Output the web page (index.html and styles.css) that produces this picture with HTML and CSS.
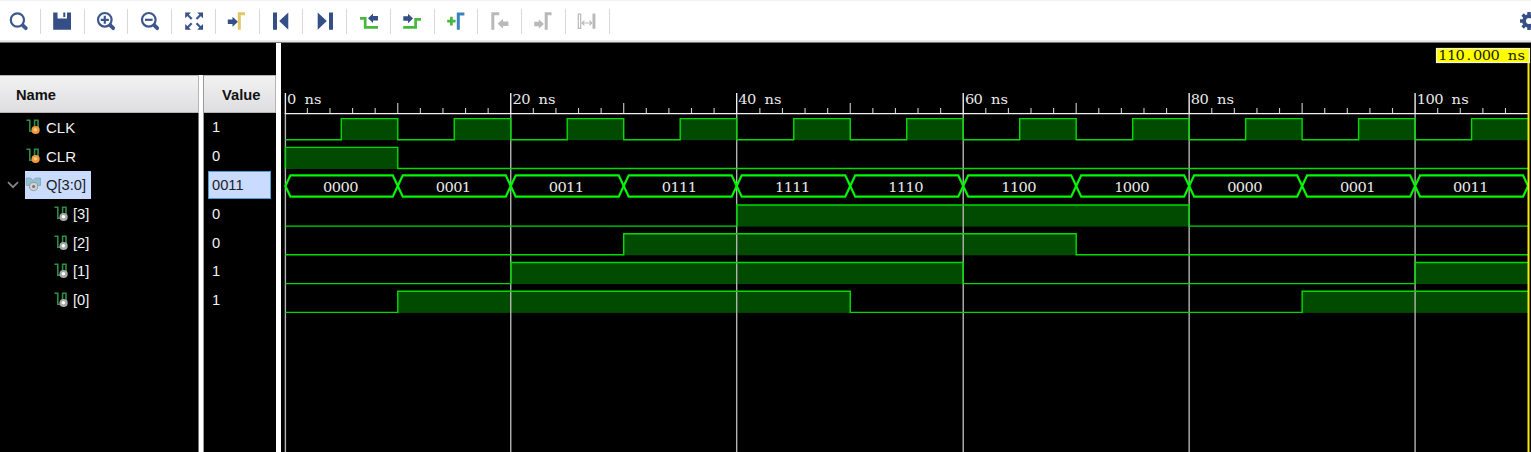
FILE: index.html
```html
<!DOCTYPE html>
<html lang="en">
<head>
<meta charset="utf-8">
<title>Waveform</title>
<link rel="stylesheet" href="styles.css">
</head>
<body>
<svg class="defs" width="0" height="0">
  <defs>
    <symbol id="scalar" viewBox="0 0 16 16">
      <path class="sig" d="M1.5 1.2H4.8V12.3H9.6V1.2H13V12"/>
      <circle class="ball" cx="10.6" cy="11" r="4.1"/>
      <circle class="core" cx="10.4" cy="10.8" r="1.8"/>
    </symbol>
  </defs>
</svg>
<div class="app">
  <header class="toolbar">
    <div class="tool"><svg viewBox="0 0 20 20"><g class="navy-line"><circle cx="8.4" cy="9" r="6.6"/><path class="thick" d="M14 14.6L16.8 17.2"/></g></svg></div>
    <div class="tool"><svg viewBox="0 0 20 20"><path class="navy" d="M1.2 1.5H5.5V7.5H15V1.5H19V18.7H1.2ZM11.3 1.5H13.3V6H11.3Z"/></svg></div>
    <div class="tool"><svg viewBox="0 0 20 20"><g class="navy-line"><circle cx="8.8" cy="8.8" r="6.8"/><path class="thick" d="M14.4 14.4L17.2 17.2"/><path d="M4.8 8.8H12.8M8.8 4.8V12.8"/></g></svg></div>
    <div class="tool"><svg viewBox="0 0 20 20"><g class="navy-line"><circle cx="8.8" cy="8.8" r="6.8"/><path class="thick" d="M14.4 14.4L17.2 17.2"/><path d="M5 8.8H12.6"/></g></svg></div>
    <div class="tool"><svg viewBox="0 0 20 20"><path class="navy" d="M1.2 1.5H7L1.2 7.3ZM13.2 1.5H19V7.3ZM1.2 13V18.8H7ZM19 13V18.8H13.2Z"/><path class="navy-line" d="M3 3.3L7.7 8M17.2 3.3L12.5 8M3 17L7.7 12.3M17.2 17L12.5 12.3"/></svg></div>
    <div class="tool"><svg viewBox="0 0 20 20"><path class="navy" d="M.8 8.6H5.5V5.8L11 10.8L5.5 15.8V13H.8Z"/><path class="gold-line" d="M12.3 18.7V2.8H18"/></svg></div>
    <div class="tool"><svg viewBox="0 0 20 20"><path class="navy" d="M2 1.5H6V18.7H2ZM17.3 1.5V18.7L8.2 10.1Z"/></svg></div>
    <div class="tool"><svg viewBox="0 0 20 20"><path class="navy" d="M14 1.5H18V18.7H14ZM2.7 1.5V18.7L11.8 10.1Z"/></svg></div>
    <div class="tool"><svg viewBox="0 0 20 20"><path class="navy" d="M9 7.2L14 2.5V5H19V9.5H14V12Z"/><path class="green-line" d="M1 7.3H6.2V16.4H19"/></svg></div>
    <div class="tool"><svg viewBox="0 0 20 20"><path class="navy" d="M11 7.4L6 2.7V5.2H1.3V9.7H6V12.2Z"/><path class="green-line" d="M1.2 16.4H13.6V8.3H19"/></svg></div>
    <div class="tool"><svg viewBox="0 0 20 20"><path class="green-line" d="M1.2 10.1H9.6M5.4 5.8V14.4"/><path class="blue-line" d="M12.3 18.7V2.9H18.4"/></svg></div>
    <div class="tool"><svg viewBox="0 0 20 20"><path class="gray-line" d="M2.8 18.7V2.8H9.3"/><path class="gray" d="M7.6 12.7L13 7.8V10.4H18.4V15H13V17.6Z"/></svg></div>
    <div class="tool"><svg viewBox="0 0 20 20"><path class="gray-line" d="M13.2 18.7V2.8H18.6"/><path class="gray" d="M10.9 13L5.8 8.3V10.8H1.2V15.2H5.8V17.7Z"/></svg></div>
    <div class="tool"><svg viewBox="0 0 20 20"><path class="gray" d="M15.5 2.6H18.4V17.8H15.5Z"/><path class="gray-thin" d="M1.3 3.1H3.7V17.3H1.3ZM5.4 12H14.4M7.4 9.7L5.1 12L7.4 14.3M12.4 9.7L14.7 12L12.4 14.3"/></svg></div>
    <div class="settings"><svg viewBox="0 0 20 20"><circle class="gear-ring" cx="10" cy="10" r="4.9"/><path class="gear-teeth" d="M10 1V4M10 16V19M1 10H4M16 10H19M3.6 3.6L5.8 5.8M14.2 14.2L16.4 16.4M16.4 3.6L14.2 5.8M5.8 14.2L3.6 16.4"/></svg></div>
  </header>
  <main class="viewer">
    <section class="signals">
      <div class="column names">
        <div class="head">Name</div>
        <div class="row top"><svg class="icon orange"><use href="#scalar"/></svg><span>CLK</span></div>
        <div class="row top"><svg class="icon orange"><use href="#scalar"/></svg><span>CLR</span></div>
        <div class="row bus">
          <svg class="chevron" viewBox="0 0 12 8"><path d="M1 1.2L6 6.2L11 1.2"/></svg>
          <div class="selected">
            <svg class="bus-icon" viewBox="0 0 16 16"><path class="bus-shape" d="M1.3 1H5.8L8 3.5L10.2 1H15.5V8.5H12L8 5L4 8.5H1.3Z"/><circle class="bus-ball" cx="8.6" cy="9.5" r="4.1"/><circle class="bus-core" cx="8.6" cy="9.5" r="1.6"/></svg>
            <span>Q[3:0]</span>
          </div>
        </div>
        <div class="row bit"><svg class="icon silver"><use href="#scalar"/></svg><span>[3]</span></div>
        <div class="row bit"><svg class="icon silver"><use href="#scalar"/></svg><span>[2]</span></div>
        <div class="row bit"><svg class="icon silver"><use href="#scalar"/></svg><span>[1]</span></div>
        <div class="row bit"><svg class="icon silver"><use href="#scalar"/></svg><span>[0]</span></div>
      </div>
      <div class="column values">
        <div class="head">Value</div>
        <div class="row">1</div>
        <div class="row">0</div>
        <div class="row active">0011</div>
        <div class="row">0</div>
        <div class="row">0</div>
        <div class="row">1</div>
        <div class="row">1</div>
      </div>
    </section>
    <svg class="wave" id="wave" viewBox="281 43 1250 409"></svg>
  </main>
</div>
<script src="wave.js"></script>
</body>
</html>
```

FILE: styles.css
```css
* { box-sizing: border-box; }
body { margin: 0; overflow: hidden; background: #000; font: 14.7px "Liberation Sans", Arial, sans-serif; }
.defs { position: absolute; }
.app { display: flex; flex-direction: column; height: 452px; }

.toolbar {
  display: flex; align-items: center; flex: none; height: 43px; padding-bottom: 1px;
  background: linear-gradient(#f3f3f3 1px, #fff 1px, #fff 40px, #eee 40px, #ddd 42px, #777 42px);
  overflow: hidden;
}
.tool {
  display: flex; align-items: center; justify-content: center; flex: none;
  width: 43.74px; height: 25px; border-right: 1px solid #d8d8d8;
}
.tool:first-child { width: 41px; padding-right: 3px; }
.tool svg, .settings svg { display: block; flex: none; width: 20px; height: 20px; }
.settings { display: flex; margin-left: auto; width: 12px; }
.navy { fill: #344f86; fill-rule: evenodd; }
.navy-line { fill: none; stroke: #3d578d; stroke-width: 2.2; }
.thick { stroke-width: 3.8; stroke-linecap: round; }
.gold-line { fill: none; stroke: #e2c565; stroke-width: 3; }
.green-line { fill: none; stroke: #45b83e; stroke-width: 2.7; }
.blue-line { fill: none; stroke: #3a82bd; stroke-width: 3; }
.gray { fill: #b9b9b9; }
.gray-line { fill: none; stroke: #b9b9b9; stroke-width: 3; }
.gray-thin { fill: none; stroke: #b9b9b9; stroke-width: 1.2; }
.gear-ring { fill: none; stroke: #344f86; stroke-width: 3.8; }
.gear-teeth { fill: none; stroke: #344f86; stroke-width: 3.5; }

.viewer { display: flex; flex: 1; min-height: 0; }
.signals { display: flex; flex: none; width: 281px; padding-top: 32px; border-right: 5px solid #fff; color: #f2f2f2; }
.column { display: flex; flex-direction: column; }
.names { width: 203px; border-right: 4px solid #fff; box-shadow: inset -1px 0 #777; }
.values { width: 73px; border-left: 1px solid #999; }
.head {
  display: flex; align-items: center; height: 38px; flex: none; padding-top: 2px;
  border: solid #b5b5b8; border-width: 1px 1px 1px 0;
  background: linear-gradient(#f2f2f3, #dedee1);
  color: #111; font-weight: bold;
}
.names .head { padding-left: 16px; }
.values .head { padding-left: 18px; }
.row { display: flex; align-items: center; height: 28.8px; flex: none; }
.top { padding-left: 25px; font-size: 15px; }
.bit { padding-left: 53px; }
.icon { width: 16px; height: 16px; margin-right: 5px; }
.bit .icon { margin-right: 4px; }
.sig { fill: none; stroke: #2e8d45; stroke-width: 1.6; }
.orange { fill: #f0983a; }
.silver { fill: #a9a9a9; }
.icon .core { fill: #fff; fill-opacity: .4; }
.orange { color: #ffc880; }
.silver { color: #fff; }
.core { fill: currentColor; }
.bus { padding-left: 7px; }
.chevron { width: 12px; height: 8px; margin-right: 6px; }
.chevron path { fill: none; stroke: #858585; stroke-width: 1.7; }
.selected { display: flex; align-items: center; width: 66px; height: 28.8px; background: #c9dcff; color: #222; }
.bus-icon { width: 16px; height: 16px; margin-right: 5px; }
.bus-shape { fill: #8fc0d4; stroke: #86a3b0; stroke-width: .8; }
.bus-ball { fill: #d2d2d2; stroke: #999; stroke-width: 1; }
.bus-core { fill: #777; }
.values .row { padding-left: 8px; }
.values .active { width: 63px; margin-left: 4px; padding-left: 3px; border: 1.5px solid #4a9cd5; background: #c9dcff; color: #222; }

.wave { display: block; flex: none; width: 1250px; height: 409px; }
.grid { stroke: #b4b4b4; stroke-width: 1.4; }
.ruler { stroke: #f0f0f0; stroke-width: 1.4; }
.major { stroke: #eee; stroke-width: 1.4; }
.tick { stroke: #ccc; stroke-width: 1.1; }
.fill { fill: #004b00; }
.trace { fill: none; stroke: #00dc00; stroke-width: 1.4; }
.bus-trace { fill: none; stroke: #00f800; stroke-width: 2.2; }
.label { fill: #e8e8e8; font: 12px "DejaVu Serif", serif; text-anchor: middle; }
.cursor { stroke: #f5f000; stroke-width: 2; }
.flag { fill: #ff0; stroke: #f4f4e0; stroke-width: 1.2; }
.dark { fill: #222200; }
```

FILE: wave.js
```javascript
const START = 285.4;
const END = 110;
const PITCH = 8.7;
const STRETCH = 1.22;
const px = t => (t > 0 && t <= 40 ? 284.8 : START) + t * 11.297;
const parts = [];

// Each character sits in a fixed-width cell and is widened, as on a terminal grid.
function label(text, left, baseline, extra = '') {
  const xs = [...text].map((_, i) => ((left + PITCH * (i + 0.5)) / STRETCH).toFixed(2)).join(' ');
  parts.push(`<text class="label ${extra}" transform="scale(${STRETCH} 1)" x="${xs}" y="${baseline}">${text}</text>`);
}

const signals = [
  { high: 118.6, pulses: Array.from({ length: 11 }, (_, i) => [i * 10 + 5, i * 10 + 10]) },
  { high: 147.4, pulses: [[0, 10]] },
  { high: 205, pulses: [[40, 80]] },
  { high: 233.7, pulses: [[30, 70]] },
  { high: 262.5, pulses: [[20, 60], [100, 110]] },
  { high: 291.3, pulses: [[10, 50], [90, 110]] }
];

for (const { high, pulses } of signals) {
  for (const [a, b] of pulses) {
    parts.push(`<rect class="fill" x="${px(a)}" y="${high}" width="${px(b) - px(a)}" height="21.6"/>`);
  }
}

for (let t = 0; t <= 100; t += 20) {
  parts.push(`<path class="grid" d="M${px(t)} 113V452"/><path class="major" d="M${px(t)} 93V114"/>`);
  label(`${t} ns`, px(t) + 2, 104.4);
}
parts.push(`<path class="ruler" d="M${START} 113.6H${px(END)}"/>`);
for (let t = 2; t < END; t += 2) {
  if (t % 20) parts.push(`<path class="tick" d="M${px(t)} ${t % 10 ? 108 : 103}V113"/>`);
}

for (const { high, pulses } of signals) {
  const low = high + 21.1;
  let d = `M${START} ${low}`;
  for (const [a, b] of pulses) {
    d += `H${px(a)}V${high}H${px(b)}`;
    if (b < END) d += `V${low}`;
  }
  parts.push(`<path class="trace" d="${d}H${px(END)}"/>`);
}

['0000', '0001', '0011', '0111', '1111', '1110', '1100', '1000', '0000', '0001', '0011'].forEach((v, i) => {
  const a = px(i * 10);
  const b = px(i * 10 + 10);
  parts.push(`<path class="bus-trace" d="M${a} 186L${a + 5} 175.4H${b - 5}L${b} 186L${b - 5} 196.6H${a + 5}Z"/>`);
  label(v, (a + b) / 2 - 2 * PITCH - 0.8, 191.7);
});

parts.push(`<path class="cursor" d="M1528.5 62V452"/><rect class="flag" x="1436.5" y="48.5" width="93" height="14"/>`);
label('110.000 ns', 1438.5, 60.3, 'dark');

document.getElementById('wave').innerHTML = parts.join('');
```
